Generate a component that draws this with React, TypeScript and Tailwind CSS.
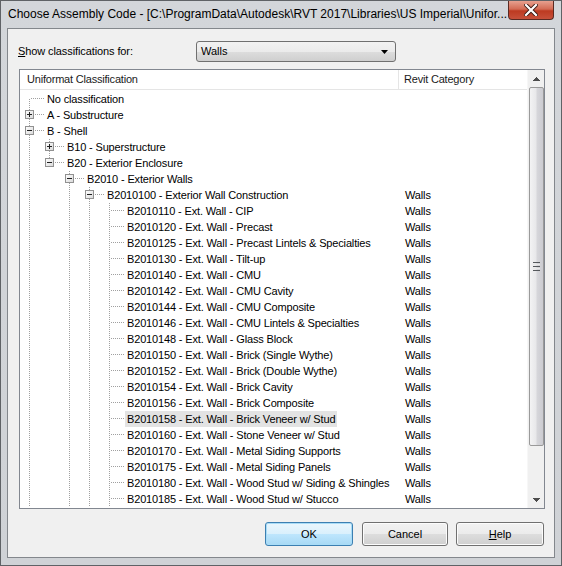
import React from "react";

type Row = {
  text: string;
  depth: number;
  kind: "leaf" | "plus" | "minus";
  next: boolean;
  first?: boolean;
  anc: number[];
  walls?: boolean;
  sel?: boolean;
};

const leafNames = [
  "B2010110 - Ext. Wall - CIP",
  "B2010120 - Ext. Wall - Precast",
  "B2010125 - Ext. Wall - Precast Lintels & Specialties",
  "B2010130 - Ext. Wall - Tilt-up",
  "B2010140 - Ext. Wall - CMU",
  "B2010142 - Ext. Wall - CMU Cavity",
  "B2010144 - Ext. Wall - CMU Composite",
  "B2010146 - Ext. Wall - CMU Lintels & Specialties",
  "B2010148 - Ext. Wall - Glass Block",
  "B2010150 - Ext. Wall - Brick (Single Wythe)",
  "B2010152 - Ext. Wall - Brick (Double Wythe)",
  "B2010154 - Ext. Wall - Brick Cavity",
  "B2010156 - Ext. Wall - Brick Composite",
  "B2010158 - Ext. Wall - Brick Veneer w/ Stud",
  "B2010160 - Ext. Wall - Stone Veneer w/ Stud",
  "B2010170 - Ext. Wall - Metal Siding Supports",
  "B2010175 - Ext. Wall - Metal Siding Panels",
  "B2010180 - Ext. Wall - Wood Stud w/ Siding & Shingles",
  "B2010185 - Ext. Wall - Wood Stud w/ Stucco",
];

const rows: Row[] = [
  { text: "No classification", depth: 0, kind: "leaf", next: true, first: true, anc: [] },
  { text: "A - Substructure", depth: 0, kind: "plus", next: true, anc: [] },
  { text: "B - Shell", depth: 0, kind: "minus", next: true, anc: [] },
  { text: "B10 - Superstructure", depth: 1, kind: "plus", next: true, anc: [0] },
  { text: "B20 - Exterior Enclosure", depth: 1, kind: "minus", next: false, anc: [0] },
  { text: "B2010 - Exterior Walls", depth: 2, kind: "minus", next: true, anc: [0] },
  { text: "B2010100 - Exterior Wall Construction", depth: 3, kind: "minus", next: true, anc: [0, 2], walls: true },
  ...leafNames.map((t) => ({
    text: t,
    depth: 4,
    kind: "leaf" as const,
    next: true,
    anc: [0, 2, 3],
    walls: true,
    sel: t.startsWith("B2010158"),
  })),
];

const DOT = "#a0a0a0";

function Connector({ row }: { row: Row }) {
  const w = 25 + 20 * row.depth;
  const x = 9 + 20 * row.depth + 0.5;
  const box = row.kind !== "leaf";
  return (
    <svg width={w} height={16} className="shrink-0" shapeRendering="crispEdges">
      {row.anc.map((a) => (
        <line key={a} x1={9 + 20 * a + 0.5} y1={0} x2={9 + 20 * a + 0.5} y2={16} stroke={DOT} strokeDasharray="1 1" />
      ))}
      <line x1={x} y1={row.first ? 8 : 0} x2={x} y2={row.next ? 16 : 8} stroke={DOT} strokeDasharray="1 1" />
      <line x1={box ? x + 5 : x + 1} y1={7.5} x2={w - 1} y2={7.5} stroke={DOT} strokeDasharray="1 1" />
      {box && (
        <g>
          <defs>
            <linearGradient id="bx" x1="0" y1="0" x2="1" y2="1">
              <stop offset="0" stopColor="#ffffff" />
              <stop offset="1" stopColor="#d8d8d8" />
            </linearGradient>
          </defs>
          <rect x={x - 4} y={3.5} width={8} height={8} fill="url(#bx)" stroke="#919191" />
          <line x1={x - 2.5} y1={7.5} x2={x + 2.5} y2={7.5} stroke="#1f1f1f" />
          {row.kind === "plus" && <line x1={x} y1={5} x2={x} y2={10} stroke="#1f1f1f" />}
        </g>
      )}
    </svg>
  );
}

function Arrow({ up }: { up?: boolean }) {
  return (
    <svg width={7} height={4} viewBox="0 0 7 4" shapeRendering="crispEdges">
      {up ? <path d="M3.5 0 L7 4 L0 4 Z" fill="#4d4d4d" /> : <path d="M0 0 L7 0 L3.5 4 Z" fill="#4d4d4d" />}
    </svg>
  );
}

export default function App() {
  const font = { fontFamily: '"Liberation Sans", Arial, sans-serif' };
  return (
    <div
      className="w-[562px] h-[566px] flex flex-col bg-[linear-gradient(180deg,#d3d6da_0%,#cfd2d6_100%)] border border-[#5f6266] overflow-hidden"
      style={font}
    >
      {/* Title bar */}
      <div className="h-[27px] flex items-start shrink-0">
        <div className="pl-[7px] pt-[5px] text-[12px] text-black whitespace-nowrap leading-[16px]">
          Choose Assembly Code - [C:\ProgramData\Autodesk\RVT 2017\Libraries\US Imperial\Unifor...
        </div>
        <div className="ml-auto mr-[7px] w-[46px] h-[19px] rounded-b-[4px] border border-t-0 border-[#5a2a22] bg-[linear-gradient(180deg,#e7a08f_0%,#d36b54_45%,#bd3a21_55%,#c7503a_100%)] flex items-center justify-center">
          <svg width={14} height={12} viewBox="0 0 14 12">
            <path d="M2 1 L12 11 M12 1 L2 11" stroke="#3a1a14" strokeWidth={4} strokeLinecap="square" />
            <path d="M2 1 L12 11 M12 1 L2 11" stroke="#ffffff" strokeWidth={2.2} strokeLinecap="square" />
          </svg>
        </div>
      </div>

      {/* Client area */}
      <div className="flex-1 mx-[6px] mb-[7px] border border-[#83878c] bg-[#f0f0f0] flex flex-col">
        <div className="flex items-center pl-[10px] pt-[12px] h-[33px] shrink-0">
          <div className="w-[178px] text-[11px] text-black tracking-[-0.1px]">
            <span className="underline">S</span>how classifications for:
          </div>
          <div className="w-[200px] h-[21px] rounded-[3px] border border-[#707070] bg-[linear-gradient(180deg,#f2f2f2_0%,#ebebeb_50%,#dddddd_51%,#cfcfcf_100%)] flex items-center pl-[4px] pr-[7px]">
            <span className="text-[11px] text-black">Walls</span>
            <svg className="ml-auto" width={7} height={4} viewBox="0 0 7 4">
              <path d="M0 0 L7 0 L3.5 4 Z" fill="#000" />
            </svg>
          </div>
        </div>

        {/* List */}
        <div className="ml-[11px] mr-[9px] mt-[7px] h-[440px] border border-[#828790] bg-white flex shrink-0">
          <div className="flex-1 flex flex-col overflow-hidden">
            <div className="h-[20px] flex items-center border-b border-[#e5e5e5] shrink-0 text-[11px] tracking-[-0.2px] text-[#1a1a1a]">
              <div className="w-[379px] pl-[7px] h-full flex items-center border-r border-[#e5e5e5]">Uniformat Classification</div>
              <div className="pl-[5px]">Revit Category</div>
            </div>
            <div className="flex flex-col text-[11px] tracking-[-0.15px] text-black pt-[1px]">
              {rows.map((r, i) => (
                <div key={i} className="h-[16px] flex items-center">
                  <Connector row={r} />
                  <div className="shrink-0 flex" style={{ width: 360 - 20 * r.depth }}>
                    <span className={`px-[2px] leading-[16px] whitespace-nowrap ${r.sel ? "bg-[#e3e3e3]" : ""}`}>{r.text}</span>
                  </div>
                  {r.walls && <span className="leading-[16px]">Walls</span>}
                </div>
              ))}
            </div>
          </div>
          {/* Scrollbar */}
          <div className="w-[17px] shrink-0 bg-[#f0f0f0] border-l border-[#f7f7f7] flex flex-col items-center">
            <div className="h-[17px] w-full flex items-center justify-center">
              <Arrow up />
            </div>
            <div className="w-[15px] h-[359px] rounded-[2px] border border-[#9a9a9a] bg-[linear-gradient(90deg,#f3f3f4_0%,#e8e8ea_45%,#d6d6da_55%,#cbcbd1_100%)] flex flex-col items-center justify-center gap-[1px]">
              <div className="w-[7px] h-[1px] bg-[#55585c]" />
              <div className="w-[7px] h-[1px] bg-[#e8e8e8]" />
              <div className="w-[7px] h-[1px] bg-[#55585c]" />
              <div className="w-[7px] h-[1px] bg-[#e8e8e8]" />
              <div className="w-[7px] h-[1px] bg-[#55585c]" />
            </div>
            <div className="flex-1" />
            <div className="h-[17px] w-full flex items-center justify-center">
              <Arrow />
            </div>
          </div>
        </div>

        {/* Buttons */}
        <div className="flex justify-end mr-[10px] mt-[13px] text-[11px] text-black">
          <div className="w-[88px] h-[24px] rounded-[3px] border border-[#3c7fb1] bg-[linear-gradient(180deg,#eaf6fd_0%,#d9f0fc_50%,#bee6fd_51%,#a7d9f5_100%)] shadow-[inset_0_0_0_1px_#a8dcf7] flex items-center justify-center">
            OK
          </div>
          <div className="w-[86px] h-[24px] ml-[9px] rounded-[3px] border border-[#707070] bg-[linear-gradient(180deg,#f2f2f2_0%,#ebebeb_50%,#dddddd_51%,#cfcfcf_100%)] shadow-[inset_0_0_0_1px_#fcfcfc] flex items-center justify-center">
            Cancel
          </div>
          <div className="w-[88px] h-[24px] ml-[8px] rounded-[3px] border border-[#707070] bg-[linear-gradient(180deg,#f2f2f2_0%,#ebebeb_50%,#dddddd_51%,#cfcfcf_100%)] shadow-[inset_0_0_0_1px_#fcfcfc] flex items-center justify-center">
            <span>
              <span className="underline">H</span>elp
            </span>
          </div>
        </div>
      </div>
    </div>
  );
}
